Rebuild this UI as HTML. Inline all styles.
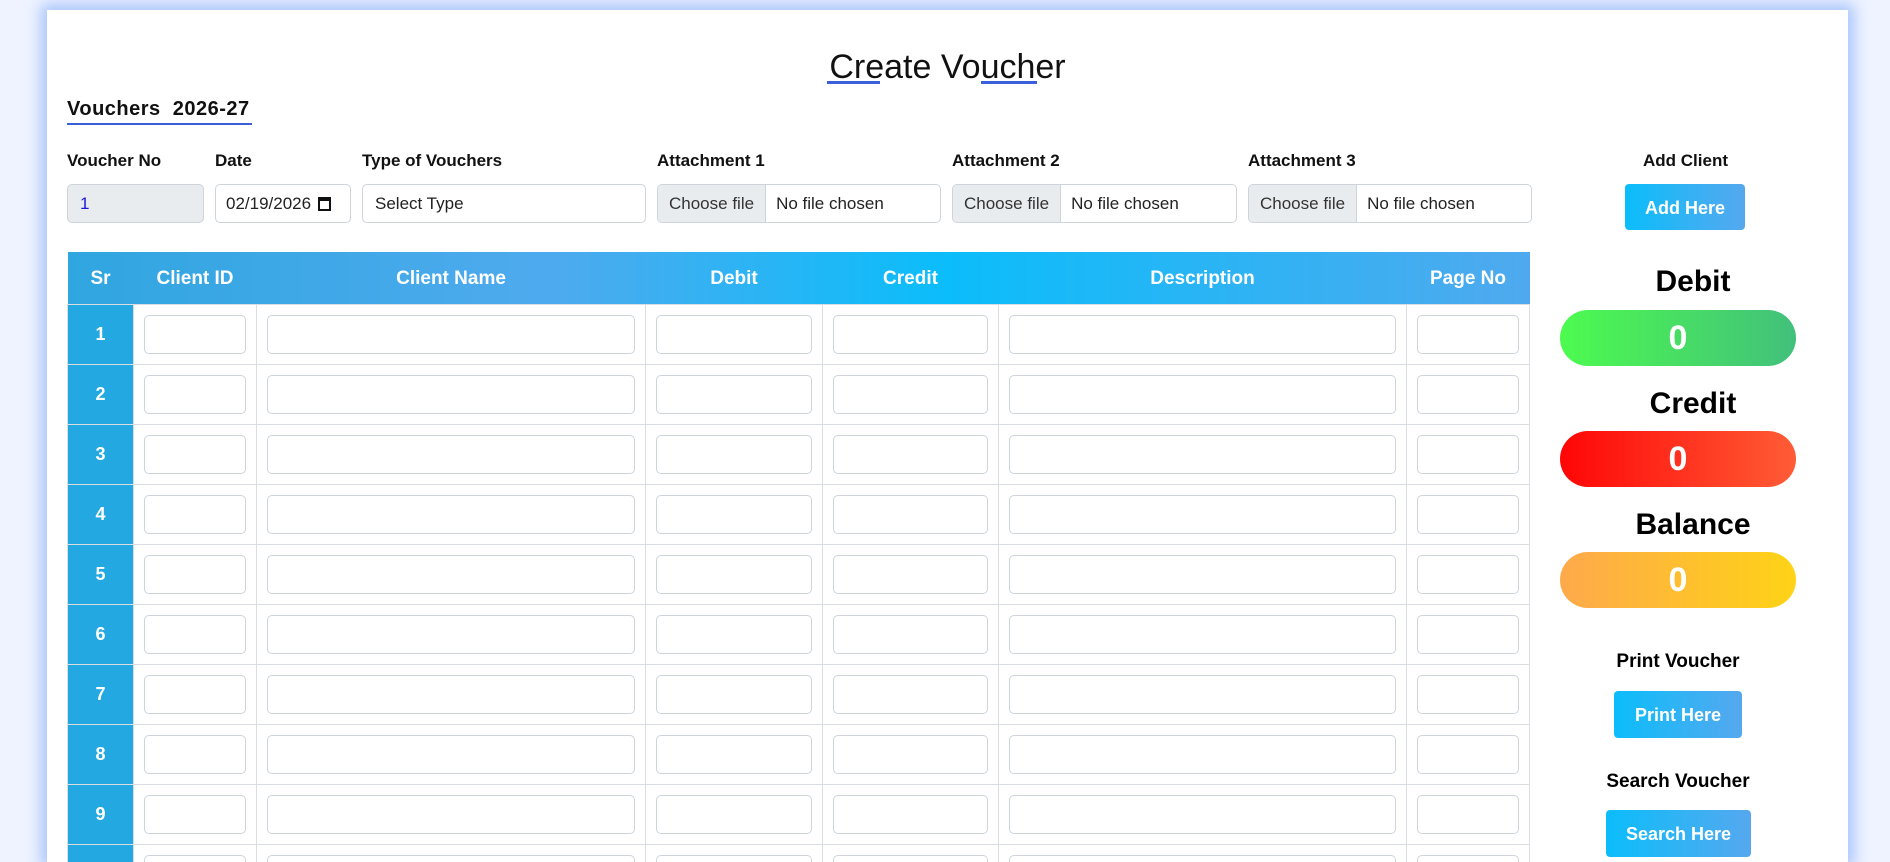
<!DOCTYPE html>
<html><head><meta charset="utf-8">
<style>
*{box-sizing:border-box;margin:0;padding:0}
html,body{width:1890px;height:862px;overflow:hidden;background:#eef3ff;font-family:"Liberation Sans",Arial,sans-serif}
.card{position:absolute;left:47px;top:10px;width:1801px;height:852px;background:#fff;box-shadow:0 0 14px 6px #a9c4fb;overflow:hidden}
.abs{position:absolute}
h1{position:absolute;left:0;width:1801px;top:38px;text-align:center;font-weight:400;font-size:34px;color:#111}
.ul{position:absolute;height:3px;background:#3a5fd9}
.lbl{position:absolute;top:141px;font-weight:bold;font-size:17px;color:#111}
.inp{position:absolute;top:174px;height:39px;border:1px solid #ced4da;border-radius:5px;background:#fff;font-size:17px;color:#222;line-height:37px;padding-left:12px}
.file{padding-left:0;display:flex;overflow:hidden}
.file span:first-child{background:#e9ecef;border-right:1px solid #ced4da;padding:0 11px;color:#333}
.file span:last-child{padding-left:10px}
.btn{position:absolute;color:#fff;font-weight:bold;font-size:18px;text-align:center;border-radius:4px;background:linear-gradient(90deg,#0bbdfb,#56a8ee)}
table{position:absolute;left:20px;top:242px;border-collapse:collapse;table-layout:fixed;width:1462px}
th{height:52px;color:#fff;font-size:19px;font-weight:bold;text-align:center;padding-top:3px}
thead tr{background:linear-gradient(90deg,#30a6e0,#4eaaee 33%,#0bbdfa 60%,#50a9ee)}
td{height:60px;border:1px solid #dadde1;padding:0 10px}
td.sr{background:#23a8e1;color:#fff;font-weight:bold;font-size:18px;text-align:center;border-color:#dadde1}
td div{height:39px;border:1px solid #ced4da;border-radius:5px}
.big{position:absolute;width:400px;left:1446px;text-align:center;font-weight:bold;color:#000}
.pill{position:absolute;left:1513px;width:236px;height:56px;border-radius:28px;color:#fff;font-weight:bold;font-size:34px;text-align:center;line-height:56px}
</style></head><body>
<div class="card">
<h1>Create Voucher</h1>
<div class="ul" style="left:780px;top:71px;width:53px"></div>
<div class="ul" style="left:934px;top:71px;width:56px"></div>
<div class="abs" style="left:20px;top:88px;font-weight:bold;font-size:20px;color:#111;letter-spacing:0.5px">Vouchers&nbsp; 2026-27</div>
<div class="ul" style="left:20px;top:113px;width:185px;height:2px"></div>
<div class="lbl" style="left:20px">Voucher No</div>
<div class="lbl" style="left:168px">Date</div>
<div class="lbl" style="left:315px">Type of Vouchers</div>
<div class="lbl" style="left:610px">Attachment 1</div>
<div class="lbl" style="left:905px">Attachment 2</div>
<div class="lbl" style="left:1201px">Attachment 3</div>
<div class="lbl" style="left:1596px">Add Client</div>
<div class="inp" style="left:20px;width:137px;background:#e9ecef;color:#1a1ad8">1</div>
<div class="inp" style="left:168px;width:136px;padding-left:10px">02/19/2026 <span style="display:inline-block;width:13px;height:14px;border:2px solid #111;border-top-width:4px;vertical-align:-2px;margin-left:2px"></span></div>
<div class="inp" style="left:315px;width:284px">Select Type</div>
<div class="inp file" style="left:610px;width:284px"><span>Choose file</span><span>No file chosen</span></div>
<div class="inp file" style="left:905px;width:285px"><span>Choose file</span><span>No file chosen</span></div>
<div class="inp file" style="left:1201px;width:284px"><span>Choose file</span><span>No file chosen</span></div>
<div class="btn" style="left:1578px;top:174px;width:120px;height:46px;line-height:48px">Add Here</div>

<table>
<colgroup><col style="width:66px"><col style="width:123px"><col style="width:389px"><col style="width:177px"><col style="width:176px"><col style="width:408px"><col style="width:123px"></colgroup>
<thead><tr><th>Sr</th><th>Client ID</th><th>Client Name</th><th>Debit</th><th>Credit</th><th>Description</th><th>Page No</th></tr></thead>
<tbody>
<tr><td class="sr">1</td><td><div></div></td><td><div></div></td><td><div></div></td><td><div></div></td><td><div></div></td><td><div></div></td></tr>
<tr><td class="sr">2</td><td><div></div></td><td><div></div></td><td><div></div></td><td><div></div></td><td><div></div></td><td><div></div></td></tr>
<tr><td class="sr">3</td><td><div></div></td><td><div></div></td><td><div></div></td><td><div></div></td><td><div></div></td><td><div></div></td></tr>
<tr><td class="sr">4</td><td><div></div></td><td><div></div></td><td><div></div></td><td><div></div></td><td><div></div></td><td><div></div></td></tr>
<tr><td class="sr">5</td><td><div></div></td><td><div></div></td><td><div></div></td><td><div></div></td><td><div></div></td><td><div></div></td></tr>
<tr><td class="sr">6</td><td><div></div></td><td><div></div></td><td><div></div></td><td><div></div></td><td><div></div></td><td><div></div></td></tr>
<tr><td class="sr">7</td><td><div></div></td><td><div></div></td><td><div></div></td><td><div></div></td><td><div></div></td><td><div></div></td></tr>
<tr><td class="sr">8</td><td><div></div></td><td><div></div></td><td><div></div></td><td><div></div></td><td><div></div></td><td><div></div></td></tr>
<tr><td class="sr">9</td><td><div></div></td><td><div></div></td><td><div></div></td><td><div></div></td><td><div></div></td><td><div></div></td></tr>
<tr><td class="sr">10</td><td><div></div></td><td><div></div></td><td><div></div></td><td><div></div></td><td><div></div></td><td><div></div></td></tr>
</tbody></table>

<div class="big" style="top:255px;font-size:30px">Debit</div>
<div class="pill" style="top:300px;background:linear-gradient(90deg,#4dfb4f,#42c07b)">0</div>
<div class="big" style="top:377px;font-size:30px">Credit</div>
<div class="pill" style="top:421px;background:linear-gradient(90deg,#ff0606,#ff5c36)">0</div>
<div class="big" style="top:498px;font-size:30px">Balance</div>
<div class="pill" style="top:542px;background:linear-gradient(90deg,#fea94b,#fed316)">0</div>
<div class="big" style="top:641px;font-size:19px;left:1431px">Print Voucher</div>
<div class="btn" style="left:1567px;top:681px;width:128px;height:47px;line-height:48px">Print Here</div>
<div class="big" style="top:761px;font-size:19px;left:1431px">Search Voucher</div>
<div class="btn" style="left:1559px;top:800px;width:145px;height:47px;line-height:48px">Search Here</div>
</div>
</body></html>
